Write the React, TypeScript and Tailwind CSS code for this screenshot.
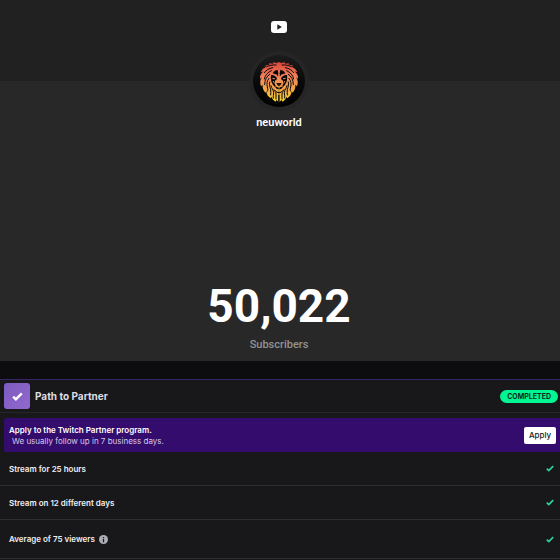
import React from 'react';

interface Requirement {
  label: string;
  hasInfo?: boolean;
  height: string;
}

const REQUIREMENTS: Requirement[] = [
  { label: 'Stream for 25 hours', height: 'h-[34px]' },
  { label: 'Stream on 12 different days', height: 'h-[34px]' },
  { label: 'Average of 75 viewers', hasInfo: true, height: 'h-[39px]' },
];

const YouTubeIcon = () => (
  <svg viewBox="0 0 16 12" className="h-3 w-4" aria-label="YouTube">
    <rect width="16" height="12" rx="3" fill="#fff" />
    <path d="M6.3 3.3v5.4l4.6-2.7z" fill="#212121" />
  </svg>
);

const CheckIcon = ({ className }: { className: string }) => (
  <svg viewBox="0 0 12 10" className={className} aria-hidden="true">
    <path d="M1.2 5.2l3 3L10.8 1.6" fill="none" stroke="currentColor" strokeWidth="2.6" />
  </svg>
);

const InfoIcon = () => (
  <svg viewBox="0 0 10 10" className="h-[9px] w-[9px]" aria-label="Info">
    <circle cx="5" cy="5" r="5" fill="#adadb8" />
    <path d="M4.3 4.4h1.4V8H4.3zM4.3 2.2h1.4v1.3H4.3z" fill="#18181b" />
  </svg>
);

// One half of the lion, mirrored to get the other one
const LionHalf = () => (
  <g strokeLinecap="round" strokeLinejoin="round">
    {/* mane */}
    <path
      d="M82 24l-8 3-10-2-1 4-12-1 1 4-14 3 5 3c-7 3-14 8-17 17l8-3c-7 7-11 14-10 22l6-4c-7 9-6 18-3 27l5-5c-1 10 2 18 9 24l2-5c0 10 6 18 14 22l1-5c3 7 7 11 12 15l4-5 6 7z"
      fill="url(#mane)"
    />
    {/* gaps between the strands */}
    <g fill="none" stroke="#080808" strokeWidth="3">
      <path d="M72 33c-10-1-20 1-28 5M62 41c-12 2-20 8-25 15" />
      <path d="M58 50c-12 6-19 14-21 25M53 61c-9 6-15 16-15 31" />
      <path d="M51 73c-7 8-7 17-5 26 1 5 2 9 1 12" />
      <path d="M53 84c-2 9 1 15 3 22 1 7 0 11 0 17" />
      <path d="M57 95c2 9 7 12 8 20 0 8-2 11-1 17" />
      <path d="M66 107c2 5 6 7 6 13v15M81 124v20" />
    </g>
    {/* forehead */}
    <path d="M79 58l-2-10c-7 0-12 4-15 10l9 3c4 1 6 4 7 8z" fill="#080808" />
    {/* eye and cheek */}
    <path d="M57 64c5-2 10 1 14 4l4 4-2 6-3 1-3 9 4 7-2 4c-9-7-14-19-12-35z" fill="#080808" />
    <path d="M61 71l8 2-1 3-6-1z" fill="url(#mane)" />
    <path d="M62 82l4-1-1 7z" fill="url(#mane)" />
    {/* muzzle */}
    <path d="M70 97l10 4v5c-6 0-10-2-10-9z" fill="#080808" />
    <path d="M70 110c3 4 6 6 11 6" fill="none" stroke="#080808" strokeWidth="3" />
  </g>
);

const LionAvatar = () => (
  <svg viewBox="0 0 162 162" className="h-full w-full" role="img" aria-label="neuworld">
    <defs>
      <linearGradient id="mane" gradientUnits="userSpaceOnUse" x1="0" y1="24" x2="0" y2="146">
        <stop offset="0" stopColor="#d9443d" />
        <stop offset="0.4" stopColor="#f28a5c" />
        <stop offset="0.7" stopColor="#f2a947" />
        <stop offset="1" stopColor="#f5dc2e" />
      </linearGradient>
      <linearGradient id="disc" x1="0" y1="0" x2="0" y2="1">
        <stop offset="0" stopColor="#1c1c1c" />
        <stop offset="0.5" stopColor="#0a0a0a" />
        <stop offset="1" stopColor="#000" />
      </linearGradient>
    </defs>
    <circle cx="81" cy="81" r="78" fill="url(#disc)" />
    <LionHalf />
    <g transform="translate(162 0) scale(-1 1)">
      <LionHalf />
    </g>
    <path d="M73 87h16l-3 6-5 4-5-4z" fill="#2a1208" />
  </svg>
);

const SubscriberCount = () => (
  <section className="flex h-[361px] flex-col items-center bg-[linear-gradient(#212121_81px,#282828_81px)] pr-[2px] font-['Roboto',sans-serif]">
    <div className="pt-[21px]">
      <YouTubeIcon />
    </div>
    <div className="mt-[18px] h-15 w-15 rounded-full bg-[#252525] p-[3px]">
      <LionAvatar />
    </div>
    <h1 className="mt-1 text-[11px] leading-4 font-semibold text-white">neuworld</h1>
    <div className="mt-auto text-[46px] leading-14 font-bold text-white">50,022</div>
    <p className="mt-[3px] mb-2 text-[11px] leading-4 font-medium text-[#929292]">Subscribers</p>
  </section>
);

const PathToPartner = () => (
  <section className="border-t border-[#37256a] bg-[#18181b] font-['Inter',sans-serif] text-[#efeff1]">
    <header className="flex h-[33px] items-center border-b border-[#26262a] pr-[2px] pl-1">
      <div className="flex h-[26px] w-[26px] items-center justify-center rounded-[3px] bg-linear-to-br from-[#7d5bbe] to-[#9169cf]">
        <CheckIcon className="h-[9px] w-[11px] text-white" />
      </div>
      <h2 className="ml-[5px] text-[10px] leading-4 font-bold text-[#dedee3]">Path to Partner</h2>
      <span className="ml-auto rounded-full bg-[#00f593] px-[7px] text-[7px] leading-[13px] font-bold text-[#0e2a1f]">
        COMPLETED
      </span>
    </header>

    <div className="mt-[5px] ml-1 flex h-[34px] items-center justify-between rounded-l-[2px] bg-[#330c6e] pr-1 pl-[5px]">
      <div className="pt-[2px] text-[8px] leading-[11px]">
        <p className="font-semibold text-white">Apply to the Twitch Partner program.</p>
        <p className="pl-[3px] text-[#d5cbe6]">We usually follow up in 7 business days.</p>
      </div>
      <button
        type="button"
        className="h-[17px] w-8 rounded-[2px] bg-white text-[8px] leading-4 font-medium text-[#18181b]"
      >
        Apply
      </button>
    </div>

    <ul>
      {REQUIREMENTS.map((item) => (
        <li
          key={item.label}
          className={`flex items-center border-b border-[#2d2d32] pr-[6px] pl-[9px] ${item.height}`}
        >
          <span className="text-[8px] leading-3 font-semibold">{item.label}</span>
          {item.hasInfo && (
            <span className="ml-1">
              <InfoIcon />
            </span>
          )}
          <CheckIcon className="ml-auto h-[7px] w-2 text-[#2fd39a]" />
        </li>
      ))}
    </ul>
  </section>
);

export default function App() {
  return (
    <main className="min-h-screen bg-[#18181b]">
      <SubscriberCount />
      <div className="h-[18px] bg-[#0d0d0f]" />
      <PathToPartner />
    </main>
  );
}
